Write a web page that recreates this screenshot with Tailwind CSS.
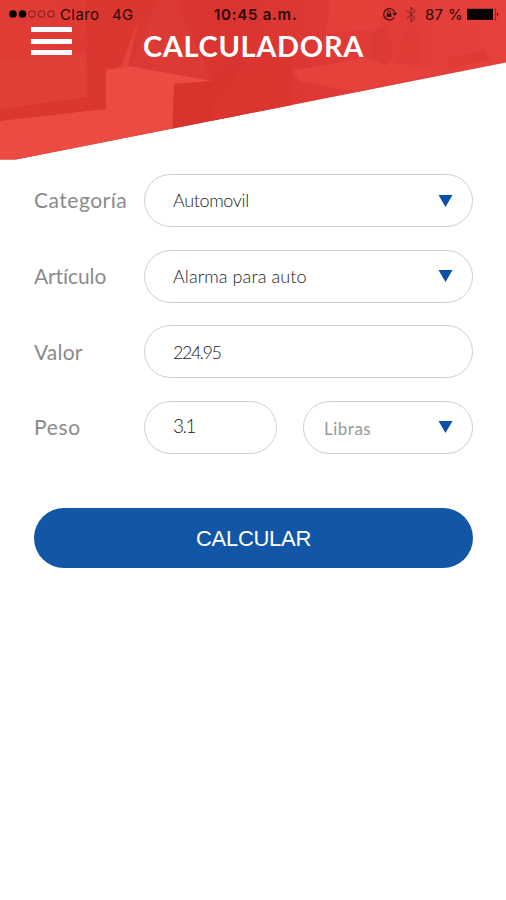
<!DOCTYPE html>
<html lang="es">
<head>
    <meta charset="UTF-8">
    <meta name="viewport" content="width=device-width, initial-scale=1.0">
    <title>Calculadora</title>
    <script src="https://cdn.jsdelivr.net/npm/@tailwindcss/browser@4"></script>
</head>
<body class="bg-white h-[900px] overflow-hidden font-['Lato',sans-serif]">
    <!-- Header -->
    <header class="relative h-[174px]">
        <svg class="absolute inset-0" width="506" height="174" viewBox="0 0 506 174">
            <defs>
                <clipPath id="slant"><path d="M0 0H506V62.5L16 159.5H0Z"/></clipPath>
                <linearGradient id="red" x1="0" x2="1" y1="0" y2="0">
                    <stop offset="0" stop-color="#e13d37"/>
                    <stop offset=".45" stop-color="#d9342f"/>
                    <stop offset=".7" stop-color="#e03b36"/>
                    <stop offset="1" stop-color="#e6413c"/>
                </linearGradient>
            </defs>
            <g clip-path="url(#slant)">
                <path d="M0 0H506V174H0Z" fill="url(#red)"/>
                <!-- Faded boxes -->
                <path d="M86 0H176L122 68H106V110L0 122V109L88 97Z" fill="#d93730"/>
                <path d="M0 60L86 54V97L0 109Z" fill="#e14039"/>
                <path d="M106 70L130 66L213 81L174 84V140L0 174V121L106 109Z" fill="#ec4b43"/>
                <path d="M130 66L158 0H176L213 81Z" fill="#dc3a34"/>
                <path d="M120 68L138 22L128 67Z" fill="#e4443d"/>
                <path d="M174 84L213 81L240 65V125L172 140Z" fill="#d7342e"/>
                <path d="M213 105L240 70L292 50V120L213 130Z" fill="#da362f"/>
                <path d="M292 70L370 58L440 72L360 92L300 82Z" fill="#e5423b"/>
                <path d="M370 34L385 27L393 50L386 66L370 58Z" fill="#dc3a34"/>
                <path d="M408 18L421 34L418 62L396 62L404 38Z" fill="#e03c36"/>
                <path d="M330 0H386L380 28L326 34Z" fill="#e4413b"/>
                <path d="M448 58L485 50L490 60L450 68Z" fill="#df3b35"/>
            </g>
        </svg>

        <!-- Status bar -->
        <div class="relative h-7 flex items-center text-[#2b0808] text-[15px] leading-none font-['Inter','Liberation_Sans',sans-serif] whitespace-nowrap">
            <div class="w-[214px] pl-[9px] flex items-center">
                <svg width="48" height="10" viewBox="0 0 48 10">
                    <circle cx="4" cy="5" r="3.8" fill="#000"/>
                    <circle cx="13.5" cy="5" r="3.8" fill="#000"/>
                    <g fill="none" stroke="#7a1d1b" stroke-width="1">
                        <circle cx="23" cy="5" r="3.3"/>
                        <circle cx="32.5" cy="5" r="3.3"/>
                        <circle cx="42" cy="5" r="3.3"/>
                    </g>
                </svg>
                <span class="ml-[3px] w-[52px] tracking-[0.4px]">Claro</span>
                <span class="tracking-[0.4px]">4G</span>
            </div>
            <div class="w-[168px] font-semibold tracking-[0.75px]">10:45 a.m.</div>
            <svg width="17" height="16" viewBox="0 0 17 16" fill="none" stroke="#3a0c0c">
                <path d="M12.3 11.2A5.7 5.7 0 1 1 12.6 6" stroke-width="1.1"/>
                <path d="M10.3 6.8H15.3L12.8 10Z" fill="#3a0c0c" stroke="none"/>
                <path d="M4.7 7.6H9.3V11H4.7Z" fill="#2b0808" stroke="none"/>
                <path d="M5.5 7.8V6.4A1.5 1.5 0 0 1 8.5 6.4V7.8" stroke-width=".9"/>
            </svg>
            <svg class="ml-[7px]" width="10" height="17" viewBox="0 0 10 17" fill="none" stroke="#7a1d1b" stroke-width="1">
                <path d="M.8 4.5L9 12L5 16V1L9 5L.8 12.5"/>
            </svg>
            <span class="ml-[9px] tracking-[0.3px]">87 %</span>
            <svg class="absolute left-[467px] top-[8px]" width="34" height="13" viewBox="0 0 34 13">
                <rect x="0" y=".8" width="26" height="11" fill="#000"/>
                <path d="M27 1.2H28.6V11.6H27" fill="none" stroke="#7a1d1b" stroke-width=".8"/>
                <path d="M30.2 4.2Q32.4 6.3 30.2 8.4Z" fill="#2b0808"/>
            </svg>
        </div>

        <!-- Title -->
        <div class="relative flex text-white pl-[31px]">
            <div class="w-[41px] h-7 -mt-px flex flex-col justify-between">
                <span class="h-[5px] bg-white"></span>
                <span class="h-[5px] bg-white"></span>
                <span class="h-[5px] bg-white"></span>
            </div>
            <h1 class="ml-[71px] text-[29px] leading-9 font-bold tracking-[0.65px]">CALCULADORA</h1>
        </div>
    </header>

    <!-- Form -->
    <form class="pl-[34px] pr-[33px] text-[#8b8b8b]">
        <div class="flex flex-col gap-[22.5px]">
            <div class="flex items-center h-[53px]">
                <label class="w-[110px] -mt-0.5 text-[21px] tracking-[0.5px]">Categoría</label>
                <div class="flex-1 h-full rounded-full border border-[#cfcfcf] flex items-center justify-between pl-7 pr-[19px]">
                    <span class="text-[18px] font-light text-[#222] tracking-[-0.35px]">Automovil</span>
                    <svg width="15" height="12" viewBox="0 0 15 12"><path d="M.5 0H14.5L7.5 12Z" fill="#0b4fa8"/></svg>
                </div>
            </div>
            <div class="flex items-center h-[53px]">
                <label class="w-[110px] text-[21px] tracking-[-0.1px]">Artículo</label>
                <div class="flex-1 h-full rounded-full border border-[#cfcfcf] flex items-center justify-between pl-7 pr-[19px]">
                    <span class="text-[18px] font-light text-[#222] tracking-[0.1px]">Alarma para auto</span>
                    <svg width="15" height="12" viewBox="0 0 15 12"><path d="M.5 0H14.5L7.5 12Z" fill="#0b4fa8"/></svg>
                </div>
            </div>
            <div class="flex items-center h-[53px]">
                <label class="w-[110px] text-[21px] tracking-[0.2px]">Valor</label>
                <div class="flex-1 h-full rounded-full border border-[#cfcfcf] flex items-center pl-7">
                    <span class="mt-0.5 text-[18px] font-light text-[#222] tracking-[-1.5px]">224.95</span>
                </div>
            </div>
            <div class="flex items-center h-[53px]">
                <label class="w-[110px] text-[21px] tracking-[0.7px]">Peso</label>
                <div class="w-[133px] h-full rounded-full border border-[#cfcfcf] flex items-center pl-7">
                    <span class="-mt-0.5 text-[19px] font-light text-[#222] tracking-[-1.5px]">3.1</span>
                </div>
                <div class="ml-[26px] flex-1 h-full rounded-full border border-[#cfcfcf] flex items-center justify-between pl-5 pr-[19px]">
                    <span class="mt-[3px] text-[17px] text-[#999] tracking-[0.5px]">Libras</span>
                    <svg width="15" height="12" viewBox="0 0 15 12"><path d="M.5 0H14.5L7.5 12Z" fill="#0b4fa8"/></svg>
                </div>
            </div>
        </div>

        <button type="button" class="mt-[54.5px] w-full h-[60px] rounded-full bg-[#1257a5] text-white text-[22px] tracking-[-0.3px] font-['Liberation_Sans',sans-serif]">CALCULAR</button>
    </form>
</body>
</html>
